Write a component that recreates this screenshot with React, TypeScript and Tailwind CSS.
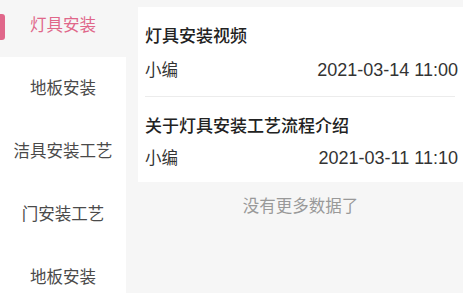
import React from "react";

const font = { fontFamily: '"Liberation Sans", "Noto Sans CJK SC", sans-serif' };

export default function App() {
  const cats = ["灯具安装", "地板安装", "洁具安装工艺", "门安装工艺", "地板安装"];
  const items = [
    { title: "灯具安装视频", author: "小编", date: "2021-03-14 11:00" },
    { title: "关于灯具安装工艺流程介绍", author: "小编", date: "2021-03-11 11:10" },
  ];
  return (
    <div
      className="flex w-[463px] h-[293px] overflow-hidden bg-[#f6f6f6]"
      style={font}
    >
      <div className="w-[126px] shrink-0 bg-white flex flex-col -mt-[6px]">
        {cats.map((c, i) => (
          <div
            key={i}
            className={
              "relative h-[63px] shrink-0 flex items-center justify-center text-[16.5px] " +
              (i === 0 ? "bg-[#f6f6f6] text-[#e0678a]" : "text-[#4a4a4a]")
            }
          >
            {i === 0 && (
              <span className="absolute left-0 top-[20px] w-[5px] h-[26px] rounded-r-[3px] bg-[#e0678a]" />
            )}
            {c}
          </div>
        ))}
      </div>
      <div className="flex-1 flex flex-col pl-[12px] pt-[7px]">
        <div className="bg-white pl-[7px] pr-[8px]">
          {items.map((it, i) => (
            <div
              key={i}
              className={
                "flex flex-col pt-[20px] " +
                (i === 0 ? "pb-[14px] border-b border-[#ececec]" : "pb-[12px]")
              }
            >
              <div className="text-[17px] leading-[20px] font-medium text-[#222]">
                {it.title}
              </div>
              <div
                className={
                  "flex justify-between items-center text-[16.5px] leading-[24px] text-[#333] " +
                  (i === 0 ? "mt-[11px]" : "mt-[9px]")
                }
              >
                <span>{it.author}</span>
                <span className="text-[18px] -mr-[3px]">{it.date}</span>
              </div>
            </div>
          ))}
        </div>
        <div className="mt-[13px] text-center text-[16.5px] leading-[22px] text-[#999]">
          没有更多数据了
        </div>
      </div>
    </div>
  );
}
